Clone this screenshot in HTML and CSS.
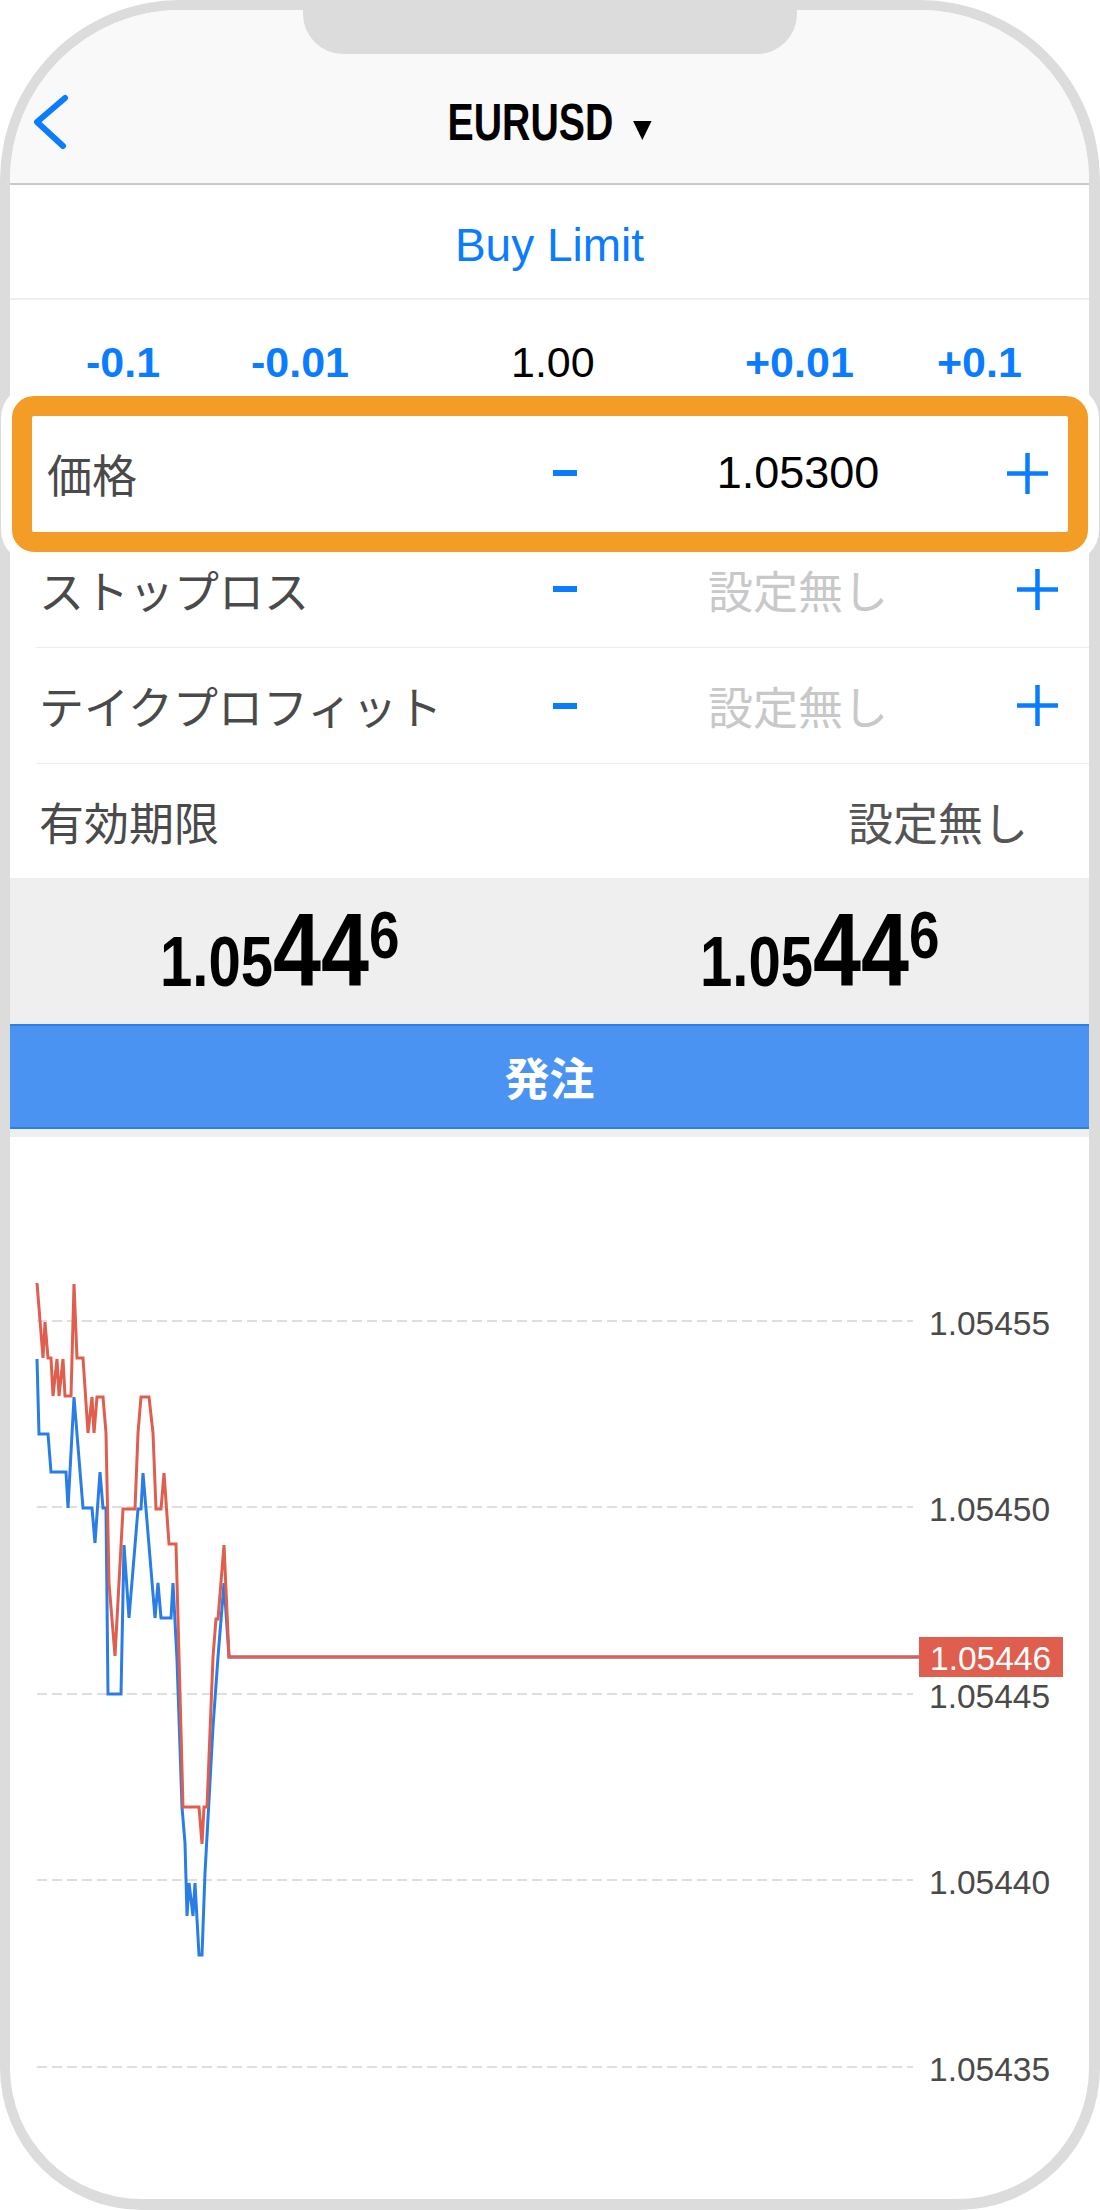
FILE: index.html
```html
<!DOCTYPE html>
<html lang="ja">
<head>
    <meta charset="UTF-8">
    <meta name="viewport" content="width=device-width, initial-scale=1.0">
    <title>EURUSD order</title>
    <link rel="stylesheet" href="styles.css">
</head>
<body>

<div class="phone">
    <div class="notch"></div>

    <header class="topbar">
        <svg class="back" width="40" height="60" viewBox="0 0 40 60">
            <path d="M34 6 L6 30 L32 54" fill="none" stroke="#0a7cff" stroke-width="6" stroke-linecap="round" stroke-linejoin="round"/>
        </svg>
        <div class="symbol">
            <span class="symbol-name">EURUSD</span><span class="caret"></span>
        </div>
        <div></div>
    </header>

    <div class="order-type">Buy Limit</div>

    <div class="lots">
        <span class="step">-0.1</span>
        <span class="step">-0.01</span>
        <span class="lot-size">1.00</span>
        <span class="step">+0.01</span>
        <span class="step">+0.1</span>
    </div>

    <div class="field field-price">
        <span class="label">価格</span>
        <span class="minus"></span>
        <span class="value">1.05300</span>
        <svg class="plus" width="41" height="41" viewBox="0 0 41 41"><path d="M20.5 0v41M0 20.5h41" stroke="#0a7cff" stroke-width="4.5"/></svg>
    </div>
    <div class="field">
        <span class="label">ストップロス</span>
        <span class="minus"></span>
        <span class="value empty">設定無し</span>
        <svg class="plus" width="41" height="41" viewBox="0 0 41 41"><path d="M20.5 0v41M0 20.5h41" stroke="#0a7cff" stroke-width="4.5"/></svg>
    </div>
    <div class="field field-line">
        <span class="label">テイクプロフィット</span>
        <span class="minus"></span>
        <span class="value empty">設定無し</span>
        <svg class="plus" width="41" height="41" viewBox="0 0 41 41"><path d="M20.5 0v41M0 20.5h41" stroke="#0a7cff" stroke-width="4.5"/></svg>
    </div>
    <div class="field field-line field-expiry">
        <span class="label">有効期限</span>
        <span class="expiry">設定無し</span>
    </div>

    <div class="quotes">
        <div class="price"><span class="price-head">1.05</span><span class="price-pips">44</span><span class="price-tail">6</span></div>
        <div class="price"><span class="price-head">1.05</span><span class="price-pips">44</span><span class="price-tail">6</span></div>
    </div>

    <button class="submit">発注</button>
    <div class="strip"></div>

    <div class="chart">
        <svg width="1079" height="1062" viewBox="10 1137 1079 1062">
            <g stroke="#dedede" stroke-width="2" stroke-dasharray="10 5">
                <line x1="37" y1="1321" x2="913" y2="1321"/>
                <line x1="37" y1="1507" x2="913" y2="1507"/>
                <line x1="37" y1="1694" x2="913" y2="1694"/>
                <line x1="37" y1="1880" x2="913" y2="1880"/>
                <line x1="37" y1="2067" x2="913" y2="2067"/>
            </g>
            <g class="axis">
                <text x="929" y="1335">1.05455</text>
                <text x="929" y="1521">1.05450</text>
                <text x="929" y="1708">1.05445</text>
                <text x="929" y="1894">1.05440</text>
                <text x="929" y="2081">1.05435</text>
            </g>
            <polyline fill="none" stroke="#2b7de6" stroke-width="3" stroke-miterlimit="3"
                points="37,1359 39,1434 48,1434 51,1472 66,1472 68,1508 74,1397 83,1508 92,1508 95,1543 100,1472 103,1508 106,1508 108,1694 121,1694 124,1545 129,1618 138,1509 141,1509 143,1473 155,1618 158,1583 161,1618 171,1618 173,1583 177,1660 182,1807 185,1843 187,1916 189,1883 193,1916 195,1883 199,1955 202,1955 205,1873 213,1727 218,1657 224,1583 229,1657 919,1657"/>
            <polyline fill="none" stroke="#df5e4e" stroke-width="3" stroke-miterlimit="3"
                points="37,1283 43,1358 45,1322 48,1358 51,1358 53,1396 57,1359 59,1396 63,1359 65,1396 71,1396 74,1284 77,1358 83,1358 88,1433 92,1397 94,1433 97,1397 103,1397 106,1433 109,1583 115,1656 123,1509 135,1509 138,1433 141,1397 149,1397 153,1433 156,1509 161,1509 164,1473 169,1544 176,1544 180,1693 183,1807 199,1807 202,1844 204,1807 207,1807 213,1657 216,1619 218,1619 224,1545 229,1657 919,1657"/>
            <rect x="919" y="1637" width="144" height="40" fill="#df5e4e"/>
            <text class="tag" x="930" y="1670">1.05446</text>
        </svg>
    </div>
</div>

</body>
</html>
```

FILE: styles.css
```css
*{
    margin: 0;
    padding: 0;
    box-sizing: border-box;
}
body{
    background: #fff;
    font-family: "Liberation Sans", "Noto Sans CJK JP", sans-serif;
}
.phone{
    position: relative;
    width: 1100px;
    height: 2210px;
    border: 10px solid #dcdcdc;
    border-right-width: 11px;
    border-bottom-width: 11px;
    border-radius: 180px 180px 142px 142px;
    background: #fff;
}
.notch{
    position: absolute;
    top: -10px;
    left: 293px;
    width: 494px;
    height: 54px;
    background: #dcdcdc;
    border-radius: 0 0 40px 40px;
}

/* header */
.topbar{
    height: 175px;
    display: grid;
    grid-template-columns: 1fr auto 1fr;
    align-items: center;
    padding: 51px 21px 0;
    background: #f9f9f9;
    border-bottom: 2px solid #c9c9c9;
    border-radius: 170px 170px 0 0;
}
.back{
    display: block;
}
/* condensed face is not installed, so the title is squeezed */
.symbol{
    display: flex;
    align-items: baseline;
    column-gap: 26px;
    transform: scaleX(0.77);
}
.symbol-name{
    font-weight: bold;
    font-size: 51px;
    color: #000;
}
.caret{
    width: 0;
    height: 0;
    margin-bottom: 5px;
    border-left: 12px solid transparent;
    border-right: 12px solid transparent;
    border-top: 19px solid #000;
}

.order-type{
    height: 115px;
    display: flex;
    align-items: center;
    justify-content: center;
    padding-top: 7px;
    border-bottom: 2px solid #efefef;
    font-size: 46px;
    color: #0a7cff;
}

.lots{
    height: 115px;
    display: grid;
    grid-template-columns: 165px 260px 234px 192px auto;
    align-items: center;
    padding: 10px 0 0 76px;
    font-size: 43px;
}
.step{
    color: #0a7cff;
    font-weight: bold;
}
.lot-size{
    color: #000;
}

/* order fields */
.field{
    position: relative;
    height: 116px;
    margin-left: 26px;
    padding-left: 3px;
    display: grid;
    grid-template-columns: 481px 90px 376px 1fr;
    align-items: center;
    font-size: 45px;
}
.field-line{
    border-top: 1px solid #ececec;
}
.label{
    color: #4a4a4a;
}
.minus{
    justify-self: center;
    width: 24px;
    height: 6px;
    background: #0a7cff;
}
.value{
    justify-self: center;
    color: #000;
}
.value.empty{
    color: #c8c8c8;
}
.plus{
    justify-self: center;
    display: block;
}
.field-price .label{
    padding-left: 8px;
}
.field-price .plus{
    margin-right: 20px;
}
.field-price::after{
    content: "";
    position: absolute;
    top: -19px;
    bottom: -21px;
    left: -24px;
    right: 1px;
    border: 20px solid #f39c26;
    border-radius: 22px;
    box-shadow: 0 0 0 11px #fff;
}
.field-expiry{
    height: 115px;
    grid-template-columns: 1fr auto;
    padding-right: 61px;
}
.expiry{
    color: #555;
}

/* bid / ask */
.quotes{
    height: 146px;
    display: grid;
    grid-template-columns: 1fr 1fr;
    padding-top: 20px;
    background: #efefef;
}
.price{
    text-align: center;
    font-size: 0;
    line-height: 1;
    font-weight: bold;
    color: #000;
    transform: scaleX(0.83);
}
.price-head{
    font-size: 70px;
}
.price-pips{
    font-size: 104px;
}
.price-tail{
    font-size: 66px;
    vertical-align: 28px;
}

.submit{
    display: block;
    width: 100%;
    height: 105px;
    border: 0;
    border-top: 2px solid #2d7fe6;
    border-bottom: 2px solid #2d7fe6;
    background: #4a93f2;
    color: #fff;
    font: bold 45px "Noto Sans CJK JP", sans-serif;
}
.strip{
    height: 8px;
    background: #efefef;
}

/* chart */
.chart{
    height: 1062px;
    border-radius: 0 0 131px 131px;
    overflow: hidden;
}
.chart svg{
    display: block;
}
.axis text{
    font-family: "Liberation Sans", sans-serif;
    font-size: 33.5px;
    fill: #4a4a4a;
}
.tag{
    font-family: "Liberation Sans", sans-serif;
    font-size: 33.5px;
    fill: #fff;
}
```
